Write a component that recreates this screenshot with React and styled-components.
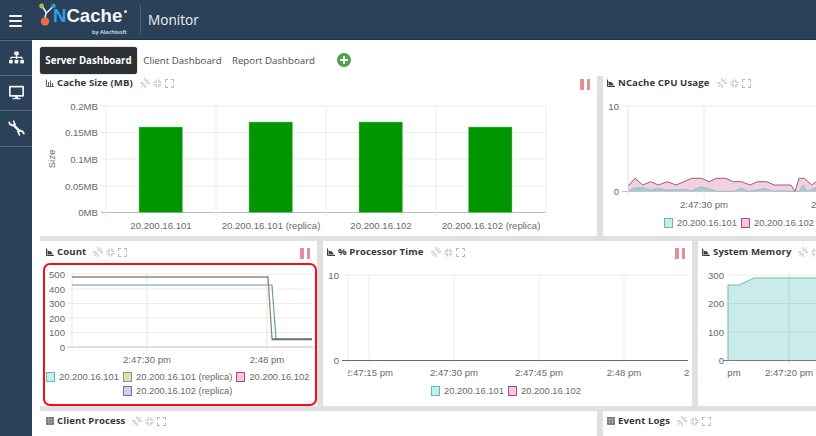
import React from 'react';
import styled, { createGlobalStyle } from 'styled-components';
import { FaSitemap, FaDesktop } from 'react-icons/fa';

const Global = createGlobalStyle`
  html, body { margin: 0; padding: 0; width: 816px; height: 436px; overflow: hidden; background: #fff; }
  #root { width: 816px; height: 436px; overflow: hidden; }
  * { box-sizing: border-box; }
`;

const Page = styled.div`
  width: 816px; height: 436px; display: flex; flex-direction: column; overflow: hidden;
  font-family: "Open Sans", "Liberation Sans", sans-serif;
`;
const TopBar = styled.header`
  height: 40px; flex: none; background: #2b4059; display: flex; align-items: center; border-bottom: 1px solid #22344a;
`;
const Burger = styled.button`
  width: 31px; height: 40px; padding: 3px 0 0; border: 0; background: none; display: flex; flex-direction: column;
  align-items: center; justify-content: center; gap: 2.5px; flex: none;
  span { display: block; width: 12.5px; height: 2.5px; background: #f4f6f8; border-radius: 1px; }
`;
const LogoWrap = styled.div`
  width: 101px; margin-left: 8px; height: 40px; position: relative; flex: none;
`;
const LogoMark = styled.svg`
  position: absolute; left: 0; top: 3px;
`;
const LogoName = styled.div`
  position: absolute; left: 14px; top: 4px; font: 700 18.6px/24px "Liberation Sans", sans-serif; color: #f5f7f9;
  b { color: #2f9fe0; font-weight: 700; }
`;
const LogoReg = styled.i`
  position: absolute; left: 85px; top: 10px; width: 3px; height: 3px; border-radius: 50%; background: #e6eaee;
`;
const LogoBy = styled.div`
  position: absolute; left: 53px; top: 28px; font: 600 5.6px/8px "Open Sans", sans-serif; color: #dfe5ea; white-space: nowrap;
`;
const Divider = styled.div`
  width: 1px; height: 29px; background: #4d6278; margin: 0 7px 0 0; flex: none;
`;
const AppName = styled.div`
  font: 400 13.6px/20px "Open Sans", sans-serif; color: #eef1f4;
`;
const Body = styled.div`
  flex: 1; display: flex; min-height: 0;
`;
const Side = styled.nav`
  width: 32px; flex: none; background: #2b4059; display: flex; flex-direction: column;
`;
const SideItem = styled.div`
  height: 35.5px; flex: none; display: flex; align-items: center; justify-content: center; color: #f2f4f6;
  border-bottom: 1px solid #566a80; border-top: ${p => (p.$first ? '1px solid #566a80' : '0')};
`;
const Main = styled.main`
  flex: 1; min-width: 0; display: flex; flex-direction: column; background: #fff; padding-left: 8px;
`;
const Tabs = styled.div`
  height: 36px; flex: none; display: flex; align-items: center; padding-top: 4px;
`;
const Tab = styled.div`
  height: 27px; display: flex; align-items: center; justify-content: center; border-radius: 3px;
  font-size: 9.7px; white-space: nowrap;
  width: ${p => p.$w}px; margin-right: ${p => p.$mr || 0}px;
  background: ${p => (p.$active ? '#2d3135' : 'transparent')};
  color: ${p => (p.$active ? '#fff' : '#4d4d4d')};
  font-weight: ${p => (p.$active ? 700 : 400)};
  box-shadow: ${p => (p.$active ? '0 0 1px #111' : 'none')};
`;
const AddBtn = styled.svg`
  margin-left: 14px; flex: none;
`;
const Board = styled.div`
  flex: 1; min-height: 0; background: #e0e0e0; display: flex; flex-direction: column; gap: 5px; overflow: hidden;
`;
const Row = styled.div`
  display: flex; gap: 6px; height: ${p => p.$h}px; flex: none;
`;
const Panel = styled.section`
  width: ${p => p.$w}px; flex: none; background: #fff; display: flex; flex-direction: column; position: relative;
`;
const PanelHead = styled.div`
  height: ${p => (p.$top ? 20 : 21)}px; flex: none; display: flex; align-items: center;
  padding: ${p => (p.$top ? '0 0 6px' : p.$low ? '0 0 1px' : '1px 0 0')} ${p => p.$pl}px;
  svg { flex: none; }
`;
const Title = styled.h3`
  margin: 0 0 0 3px; font: 700 9.6px/14px "Open Sans", sans-serif; color: #34383c; white-space: nowrap; letter-spacing: 0.1px;
`;
const Tools = styled.div`
  display: flex; gap: 3px; margin-left: 7px; align-items: center; flex: none;
`;
const Pause = styled.div`
  position: absolute; top: ${p => p.$t}px; right: ${p => p.$r}px; display: flex; gap: 3px;
  i { display: block; width: 3.5px; height: 10.5px; background: #e68f96; }
`;
const Plot = styled.svg`
  display: block; flex: none;
  text { font-family: "Liberation Sans", sans-serif; font-size: 9.6px; fill: #6a6a6a; }
`;
const Legend = styled.div`
  display: flex; flex-direction: column; gap: 3px; padding-left: ${p => p.$pl}px; margin-top: ${p => p.$mt || 0}px;
  font: 400 9.4px/11px "Liberation Sans", sans-serif; color: #6a6a6a;
`;
const LegendRow = styled.div`
  display: flex; padding-left: ${p => p.$pl || 0}px; white-space: nowrap;
`;
const LegendItem = styled.span`
  display: flex; align-items: center; margin-right: 4px;
`;
const Swatch = styled.i`
  display: block; width: 9px; height: 10px; margin-right: 4px; flex: none; background: ${p => p.$bg}; border: 1px solid ${p => p.$bd};
`;
const Highlight = styled.div`
  margin: 1px 0 0 3px; height: 143px; border: 2px solid #f20f1c; border-radius: 7px; overflow: hidden;
  display: flex; flex-direction: column; position: relative;
`;

const TEAL = ['#c5eeea', '#67b8b1'];
const OLIVE = ['#e0ddb8', '#99966c'];
const PINK = ['#f6c6df', '#a54d7c'];
const PURP = ['#d8cdea', '#7a6a9c'];

const z = (pts, ox, oy) => pts.map(([x, y]) => `${(ox + x / 3).toFixed(1)},${(oy + y / 3).toFixed(1)}`).join(' ');

const AreaIcon = () => (
  <svg width="8" height="8" viewBox="0 0 8 8">
    <path d="M0.5 0.5V7.5H8" fill="none" stroke="#3c4044" strokeWidth="1" />
    <path d="M1.5 6.5V2l1.7 1.2L4.6 3 7 6.5z" fill="#3c4044" />
  </svg>
);
const BarIcon = () => (
  <svg width="8" height="8" viewBox="0 0 8 8">
    <path d="M0.5 0.5V7.5H8" fill="none" stroke="#60656a" strokeWidth="1" />
    <path d="M2 3h1v4H2zM4 1.5h1V7H4zM6 4h1v3H6z" fill="#60656a" />
  </svg>
);
const TableIcon = () => (
  <svg width="8" height="8" viewBox="0 0 8 8">
    <rect width="8" height="8" rx="1" fill="#6c7074" />
    <path d="M0 2.5h8M0 5h8M2.7 0v8M5.3 0v8" stroke="#d5d5d5" strokeWidth="0.5" />
  </svg>
);
const Spin = () => (
  <svg width="10" height="10" viewBox="0 0 10 10" stroke="#cacaca" strokeWidth="1.3">
    <path d="M5 0v3.4M5 6.6V10M0 5h3.4M6.6 5H10M1.5 8.5l2.3-2.3M6.2 3.8l2.3-2.3" />
  </svg>
);
const Compress = () => (
  <svg width="9" height="9" viewBox="0 0 9 9" fill="none" stroke="#b4b4b4" strokeWidth="1">
    <path d="M0.5 3.2h2.7V0.5M5.8 0.5v2.7h2.7M0.5 5.8h2.7v2.7M5.8 8.5V5.8h2.7" />
  </svg>
);
const Expand = () => (
  <svg width="9" height="9" viewBox="0 0 9 9" fill="none" stroke="#b4b4b4" strokeWidth="1">
    <path d="M0.5 3V0.5H3M6 0.5h2.5V3M0.5 6v2.5H3M6 8.5h2.5V6" />
  </svg>
);
const Head = ({ icon, title, top, low, pl }) => (
  <PanelHead $top={top} $low={low} $pl={pl}>
    {icon}
    <Title>{title}</Title>
    <Tools><Spin /><Compress /><Expand /></Tools>
  </PanelHead>
);
const Leg = ({ items }) => items.map(([c, t]) => (
  <LegendItem key={t}><Swatch $bg={c[0]} $bd={c[1]} />{t}</LegendItem>
));

const CachePlot = () => {
  const bars = [[139, 127], [249, 122], [359, 122], [468.5, 127]];
  const labels = [[161, '20.200.16.101'], [271, '20.200.16.101 (replica)'], [381, '20.200.16.102'], [491, '20.200.16.102 (replica)']];
  const ys = [[106, '0.2MB'], [132.5, '0.15MB'], [159, '0.1MB'], [186, '0.05MB'], [212.5, '0MB']];
  return (
    <Plot width="557" height="140" viewBox="40 96 557 140">
      {ys.map(([y, t]) => (
        <g key={t}>
          <line x1="101" x2="546" y1={y} y2={y} stroke={t === '0MB' ? '#bdbdbd' : '#ececec'} />
          <text x="98" y={y + 3.5} textAnchor="end">{t}</text>
        </g>
      ))}
      {[106, 216, 326, 436, 546].map(x => <line key={x} x1={x} x2={x} y1="106" y2="217" stroke="#ececec" />)}
      {bars.map(([x, y]) => <rect key={x} x={x} y={y} width="43.5" height={212.5 - y} fill="#009600" stroke="#7fcf7f" strokeWidth="0.5" />)}
      {labels.map(([x, t]) => <text key={t} x={x} y="228.5" textAnchor="middle">{t}</text>)}
      <text transform="translate(55 159) rotate(-90)" textAnchor="middle">Size</text>
    </Plot>
  );
};

const CpuPlot = () => {
  const pink = [[205,348],[225,325],[248,345],[272,335],[295,345],[322,335],[348,345],[372,335],[395,325],[425,325],[447,335],[470,325],[497,325],[520,335],[545,335],[570,345],[592,335],[620,335],[642,345],[693,345],[705,365],[717,325],[733,325],[755,345],[768,335]];
  const teal = [[205,362],[225,353],[250,353],[272,360],[295,355],[320,360],[372,358],[395,362],[420,350],[445,355],[470,364],[520,364],[545,354],[565,364],[590,360],[615,355],[640,364],[665,362],[705,365],[717,364],[730,345],[742,364],[755,358],[768,352]];
  return (
    <Plot width="213" height="120" viewBox="603 96 213 120">
      <line x1="622" x2="816" y1="106" y2="106" stroke="#ececec" />
      <line x1="622" x2="816" y1="191.5" y2="191.5" stroke="#bdbdbd" />
      {[628, 704].map(x => <line key={x} x1={x} x2={x} y1="106" y2="196" stroke="#e6e6e6" />)}
      <polygon points={`${z(pink, 560, 70)} 816,191.5 628,191.5`} fill="#f3cfe2" />
      <polyline points={z(pink, 560, 70)} fill="none" stroke="#9c5a80" strokeWidth="1" />
      <polygon points={`${z(teal, 560, 70)} 816,191.5 628,191.5`} fill="#a9c9d0" />
      <polyline points={z(teal, 560, 70)} fill="none" stroke="#8fc0c0" strokeWidth="0.8" />
      <text x="619" y="110" textAnchor="end">10</text>
      <text x="619" y="195" textAnchor="end">0</text>
      <text x="704" y="207.5" textAnchor="middle">2:47:30 pm</text>
      <text x="811" y="207.5">2:48 pm</text>
    </Plot>
  );
};

const CountPlot = () => (
  <Plot width="270" height="106" viewBox="45 265 270 106">
    {[[274, '500'], [289, '400'], [303.5, '300'], [318, '200'], [332.5, '100'], [347, '0']].map(([y, t]) => (
      <g key={t}>
        <line x1="68" x2="313" y1={y} y2={y} stroke={t === '0' ? '#bdbdbd' : '#ececec'} />
        <text x="65" y={y + 3.5} textAnchor="end">{t}</text>
      </g>
    ))}
    {[72, 147, 267].map(x => <line key={x} x1={x} x2={x} y1="274" y2="351" stroke="#e6e6e6" />)}
    <polyline points="72,285 272,285 276,339 312,339" fill="none" stroke="#6f9c9c" strokeWidth="1.2" />
    <polyline points="72,277 268,277 272,339 312,339" fill="none" stroke="#8e8a70" strokeWidth="1.3" />
    <line x1="272" x2="312" y1="339.5" y2="339.5" stroke="#55786e" strokeWidth="1.6" />
    <text x="147" y="362.5" textAnchor="middle">2:47:30 pm</text>
    <text x="267" y="362.5" textAnchor="middle">2:48 pm</text>
  </Plot>
);

const ProcessorPlot = () => (
  <Plot width="369" height="123" viewBox="322 262 369 123">
    <defs><clipPath id="pc"><rect x="347" y="262" width="340" height="123" /></clipPath></defs>
    <line x1="341" x2="687" y1="275" y2="275" stroke="#ececec" />
    {[347, 368, 453, 538, 623].map(x => <line key={x} x1={x} x2={x} y1="275" y2="364" stroke="#ececec" />)}
    <line x1="341" x2="687" y1="360.5" y2="360.5" stroke="#5d6c78" strokeWidth="1.2" />
    <text x="338" y="278.5" textAnchor="end">10</text>
    <text x="338" y="364" textAnchor="end">0</text>
    <g clipPath="url(#pc)">
      {[[368, '2:47:15 pm'], [453, '2:47:30 pm'], [538, '2:47:45 pm'], [623, '2:48 pm']].map(([x, t]) => (
        <text key={t} x={x} y="375.5" textAnchor="middle">{t}</text>
      ))}
    </g>
    <text x="683" y="375.5">2</text>
  </Plot>
);

const MemoryPlot = () => (
  <Plot width="119" height="132" viewBox="697 262 119 132">
    {[[275, '300'], [303.5, '200'], [332, '100'], [360, '0']].map(([y, t]) => (
      <text key={t} x="723" y={y + 3.5} textAnchor="end">{t}</text>
    ))}
    <line x1="727" x2="816" y1="275" y2="275" stroke="#ececec" />
    <polygon points="727,285 738,285 753,278 816,278 816,360 727,360" fill="#c9ecea" />
    <polyline points="727,360 727,285 738,285 753,278 816,278" fill="none" stroke="#70b9b4" />
    {[303.5, 332].map(y => <line key={y} x1="727" x2="816" y1={y} y2={y} stroke="#b5dcdb" />)}
    <line x1="788" x2="788" y1="275" y2="364" stroke="#aed6d5" />
    <line x1="722" x2="816" y1="360.5" y2="360.5" stroke="#8a6f90" strokeWidth="1.2" />
    <text x="733" y="375.5" textAnchor="middle">pm</text>
    <text x="788" y="375.5" textAnchor="middle">2:47:20 pm</text>
  </Plot>
);

export default function App() {
  return (
    <Page>
      <Global />
      <TopBar>
        <Burger aria-label="menu"><span /><span /><span /></Burger>
        <LogoWrap>
          <LogoMark width="18" height="24" viewBox="0 0 18 24">
            <path d="M3 3l4.5 7M14.5 3L7.5 10M7 10l-1 5" stroke="#e6eaee" strokeWidth="1.6" fill="none" />
            <circle cx="2.6" cy="3" r="2.4" fill="#9cc63c" />
            <circle cx="14.5" cy="3" r="2.2" fill="#2f9fe0" />
            <circle cx="6" cy="18.5" r="4.2" fill="#ea6f3c" />
          </LogoMark>
          <LogoName><b>N</b>Cache</LogoName>
          <LogoReg />
          <LogoBy>by Alachisoft</LogoBy>
        </LogoWrap>
        <Divider />
        <AppName>Monitor</AppName>
      </TopBar>
      <Body>
        <Side>
          <SideItem $first><FaSitemap size={15} /></SideItem>
          <SideItem><FaDesktop size={15} /></SideItem>
          <SideItem>
            <svg width="17" height="18" viewBox="0 0 17 18" fill="none" stroke="#f2f4f6" strokeWidth="2.1" strokeLinecap="round">
              <path d="M1.3 3.6A3.2 3.2 0 0 0 6.8 5.2" />
              <path d="M5.8 6.4L11.2 11.6" strokeWidth="2.6" />
              <path d="M15.7 14.4A3.2 3.2 0 0 0 10.2 12.8" />
              <path d="M6.8 5.2L5.6 2" strokeWidth="1.6" />
              <path d="M10.2 12.8L11.4 16" strokeWidth="1.6" />
            </svg>
          </SideItem>
        </Side>
        <Main>
          <Tabs>
            <Tab $active $w={97} $mr={7}>Server Dashboard</Tab>
            <Tab $w={77} $mr={12}>Client Dashboard</Tab>
            <Tab $w={81} $mr={9}>Report Dashboard</Tab>
            <AddBtn width="14" height="14" viewBox="0 0 15 15">
              <circle cx="7.5" cy="7.5" r="7.5" fill="#4ea546" />
              <path d="M7.5 3.2v8.6M3.2 7.5h8.6" stroke="#fff" strokeWidth="2.2" />
            </AddBtn>
          </Tabs>
          <Board>
            <Row $h={160}>
              <Panel $w={557}>
                <Head icon={<BarIcon />} title="Cache Size (MB)" top pl={6} />
                <Pause $r={7} $t={3}><i /><i /></Pause>
                <CachePlot />
              </Panel>
              <Panel $w={213}>
                <Head icon={<AreaIcon />} title="NCache CPU Usage" top pl={4} />
                <CpuPlot />
                <Legend $pl={61} $mt={1}>
                  <LegendRow><Leg items={[[TEAL, '20.200.16.101'], [PINK, '20.200.16.102']]} /></LegendRow>
                </Legend>
              </Panel>
            </Row>
            <Row $h={165}>
              <Panel $w={277}>
                <Head icon={<AreaIcon />} title="Count" pl={6} />
                <Pause $r={7} $t={7}><i /><i /></Pause>
                <Highlight>
                  <CountPlot />
                  <Legend $pl={1}>
                    <LegendRow><Leg items={[[TEAL, '20.200.16.101'], [OLIVE, '20.200.16.101 (replica)'], [PINK, '20.200.16.102']]} /></LegendRow>
                    <LegendRow $pl={77}><Leg items={[[PURP, '20.200.16.102 (replica)']]} /></LegendRow>
                  </Legend>
                </Highlight>
              </Panel>
              <Panel $w={369}>
                <Head icon={<AreaIcon />} title="% Processor Time" pl={4} />
                <Pause $r={7} $t={7}><i /><i /></Pause>
                <ProcessorPlot />
                <Legend $pl={108}>
                  <LegendRow><Leg items={[[TEAL, '20.200.16.101'], [PINK, '20.200.16.102']]} /></LegendRow>
                </Legend>
              </Panel>
              <Panel $w={119}>
                <Head icon={<AreaIcon />} title="System Memory" pl={4} />
                <MemoryPlot />
              </Panel>
            </Row>
            <Row $h={30}>
              <Panel $w={557}>
                <Head icon={<TableIcon />} title="Client Process" low pl={6} />
              </Panel>
              <Panel $w={213}>
                <Head icon={<TableIcon />} title="Event Logs" low pl={4} />
              </Panel>
            </Row>
          </Board>
        </Main>
      </Body>
    </Page>
  );
}
